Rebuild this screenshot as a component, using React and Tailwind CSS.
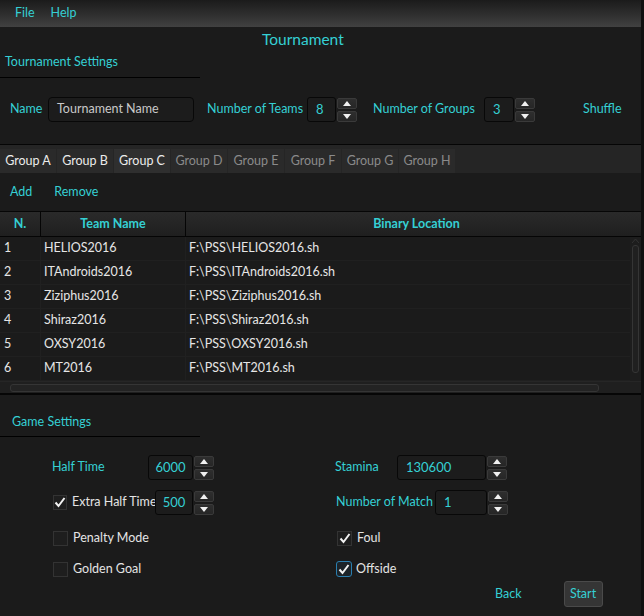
import { useState } from 'react'

const cyan = 'text-[#35d0d4]'

const teams = [
  { n: 1, name: 'HELIOS2016' },
  { n: 2, name: 'ITAndroids2016' },
  { n: 3, name: 'Ziziphus2016' },
  { n: 4, name: 'Shiraz2016' },
  { n: 5, name: 'OXSY2016' },
  { n: 6, name: 'MT2016' },
]

const groups = ['A', 'B', 'C', 'D', 'E', 'F', 'G', 'H']

function Arrow({ down }) {
  return (
    <svg width="8" height="5" viewBox="0 0 8 5" className="block">
      {down ? <path d="M0 0 H8 L4 5 Z" fill="#f0f0f0" /> : <path d="M0 5 H8 L4 0 Z" fill="#f0f0f0" />}
    </svg>
  )
}

function Spinner({ value, width, color = cyan, align = 'left' }) {
  return (
    <div className="flex items-center">
      <div
        className={`h-[25px] rounded-[3px] border border-[#080808] bg-[#1c1c1c] flex items-center text-[13px] ${color} ${align === 'center' ? 'justify-center' : 'pl-[8px]'}`}
        style={{ width }}
      >
        {value}
      </div>
      <div className="ml-[1px] flex flex-col gap-[2px]">
        <div className="w-[20px] h-[11px] rounded-[2px] border border-[#3a3a3a] bg-gradient-to-b from-[#2e2e2e] to-[#262626] flex items-center justify-center">
          <Arrow />
        </div>
        <div className="w-[20px] h-[11px] rounded-[2px] border border-[#3a3a3a] bg-gradient-to-b from-[#2e2e2e] to-[#262626] flex items-center justify-center">
          <Arrow down />
        </div>
      </div>
    </div>
  )
}

function Check({ checked, focused, label }) {
  return (
    <div className="flex items-center">
      <div
        className={`flex items-center justify-center ${
          focused
            ? 'w-[16px] h-[16px] rounded-[3px] border border-[#2a7fb0] bg-[#1c2328]'
            : 'w-[15px] h-[15px] border border-[#333] bg-[#1e1e1e]'
        }`}
      >
        {checked && (
          <svg width="12" height="11" viewBox="0 0 12 11">
            <path d="M1.5 5.5 L4.5 9 L10.5 1" stroke="#f2f2f2" strokeWidth="2" fill="none" />
          </svg>
        )}
      </div>
      {label && <span className={`${focused ? 'ml-[4px]' : 'ml-[5px]'} text-[#e4e4e4]`}>{label}</span>}
    </div>
  )
}

export default function App() {
  const [activeGroup] = useState('C')

  return (
    <div
      className="w-[644px] h-[616px] bg-[#1b1b1b] overflow-hidden border-r-[3px] border-[#101010] text-[12.5px] whitespace-nowrap"
      style={{ fontFamily: 'Lato, "Open Sans", sans-serif' }}
    >
      {/* menu bar */}
      <div className={`h-[27px] bg-gradient-to-b from-[#1b1b1b] to-[#414141] flex items-center pl-[15px] gap-[16px] ${cyan}`}>
        <span>File</span>
        <span>Help</span>
      </div>

      <div className={`h-[26px] flex items-center pl-[262px] text-[15.5px] ${cyan}`}>Tournament</div>

      <div className={`h-[18px] flex items-center pl-[5px] ${cyan}`}>Tournament Settings</div>
      <div className="mt-[6px] w-[200px] h-px bg-black" />

      {/* tournament settings row */}
      <div className="mt-[19px] h-[25px] flex items-center">
        <span className={`ml-[10px] w-[38px] ${cyan}`}>Name</span>
        <div className="w-[146px] h-[25px] rounded-[4px] border border-[#080808] bg-[#1c1c1c] flex items-center pl-[8px] text-[#c9c9c9]">
          Tournament Name
        </div>
        <span className={`ml-[13px] w-[100px] ${cyan}`}>Number of Teams</span>
        <Spinner value="8" width={29} />
        <span className={`ml-[16px] w-[111px] ${cyan}`}>Number of Groups</span>
        <Spinner value="3" width={30} />
        <span className={`ml-[48px] ${cyan}`}>Shuffle</span>
      </div>

      {/* tab pane */}
      <div className="mt-[22px] border-t border-[#050505]">
        <div className="h-[28px] bg-[#252525] flex items-end">
          {groups.map((g) => {
            const enabled = ['A', 'B', 'C'].includes(g)
            return (
              <div
                key={g}
                className={`h-[24px] w-[56px] mr-[1px] flex items-center justify-center ${
                  g === activeGroup ? 'bg-[#2f2f2f]' : 'bg-[#2a2a2a]'
                } ${enabled ? 'text-[#ececec]' : 'text-[#8a8a8a]'}`}
              >
                Group {g}
              </div>
            )
          })}
        </div>

        <div className={`h-[38px] flex items-center pl-[10px] gap-[22px] ${cyan}`}>
          <span>Add</span>
          <span>Remove</span>
        </div>

        {/* table */}
        <div className="w-[641px] border-t border-b-2 border-[#060606]">
          <div className="flex h-[25px] border-b border-[#050505] bg-gradient-to-b from-[#2a2a2a] to-[#1f1f1f] font-bold text-[#35d0d4]">
            <div className="w-[41px] border-r border-[#050505] flex items-center justify-center">N.</div>
            <div className="w-[145px] border-r border-[#050505] flex items-center justify-center">Team Name</div>
            <div className="flex-1 flex items-center justify-center pl-[6px]">Binary Location</div>
          </div>
          <div className="flex">
            <div className="flex-1">
              {teams.map((t) => (
                <div key={t.n} className="flex h-[24px] border-b border-[#202020] text-[#e6e6e6]">
                  <div className="w-[41px] border-r border-[#202020] flex items-center pl-[4px]">{t.n}</div>
                  <div className="w-[145px] border-r border-[#202020] flex items-center pl-[3px]">{t.name}</div>
                  <div className="flex-1 flex items-center pl-[3px]">F:\PSS\{t.name}.sh</div>
                </div>
              ))}
            </div>
            <div className="w-[11px] bg-[#1d1d1d] flex flex-col items-center pt-[2px]">
              <svg width="7" height="4" viewBox="0 0 7 4"><path d="M0 4 L3.5 0 L7 4" stroke="#333" fill="none" /></svg>
              <div className="mt-[2px] w-[7px] h-[128px] rounded-[3px] border border-[#353535] bg-[#202020]" />
            </div>
          </div>
          <div className="h-[12px] flex items-center bg-[#1f1f1f] border-t border-[#262626]">
            <div className="ml-[10px] w-[589px] h-[8px] rounded-[3px] border border-[#353535] bg-[#232323]" />
          </div>
        </div>
      </div>

      {/* game settings */}
      <div className={`mt-[18px] h-[18px] flex items-center pl-[12px] ${cyan}`}>Game Settings</div>
      <div className="mt-[5px] w-[200px] h-px bg-black" />

      <div className="mt-[18px] flex">
        <div className="ml-[52px] w-[283px] flex flex-col">
          <div className="h-[25px] flex items-center">
            <span className={`w-[96px] ${cyan}`}>Half Time</span>
            <Spinner value="6000" width={45} align="center" />
          </div>
          <div className="mt-[10px] h-[25px] flex items-center">
            <div className="w-[103px] pl-[1px]">
              <Check checked label="Extra Half Time" />
            </div>
            <Spinner value="500" width={38} align="center" />
          </div>
          <div className="mt-[11px] h-[24px] flex items-center pl-[1px]">
            <Check label="Penalty Mode" />
          </div>
          <div className="mt-[7px] h-[24px] flex items-center pl-[1px]">
            <Check label="Golden Goal" />
          </div>
        </div>

        <div className="flex flex-col">
          <div className="h-[25px] flex items-center">
            <span className={`w-[62px] ${cyan}`}>Stamina</span>
            <Spinner value="130600" width={89} />
          </div>
          <div className="mt-[10px] h-[25px] flex items-center">
            <span className={`ml-[1px] w-[99px] ${cyan}`}>Number of Match</span>
            <Spinner value="1" width={52} />
          </div>
          <div className="mt-[11px] h-[24px] flex items-center pl-[2px]">
            <Check checked label="Foul" />
          </div>
          <div className="mt-[7px] h-[24px] flex items-center pl-[1px]">
            <Check checked focused label="Offside" />
          </div>
          <div className="h-[26px] flex items-center">
            <span className={`ml-[160px] ${cyan}`}>Back</span>
            <div className={`ml-[42px] w-[39px] h-[26px] rounded-[3px] border border-[#4a4a4a] bg-[#353535] flex items-center justify-center ${cyan}`}>
              Start
            </div>
          </div>
        </div>
      </div>
    </div>
  )
}
